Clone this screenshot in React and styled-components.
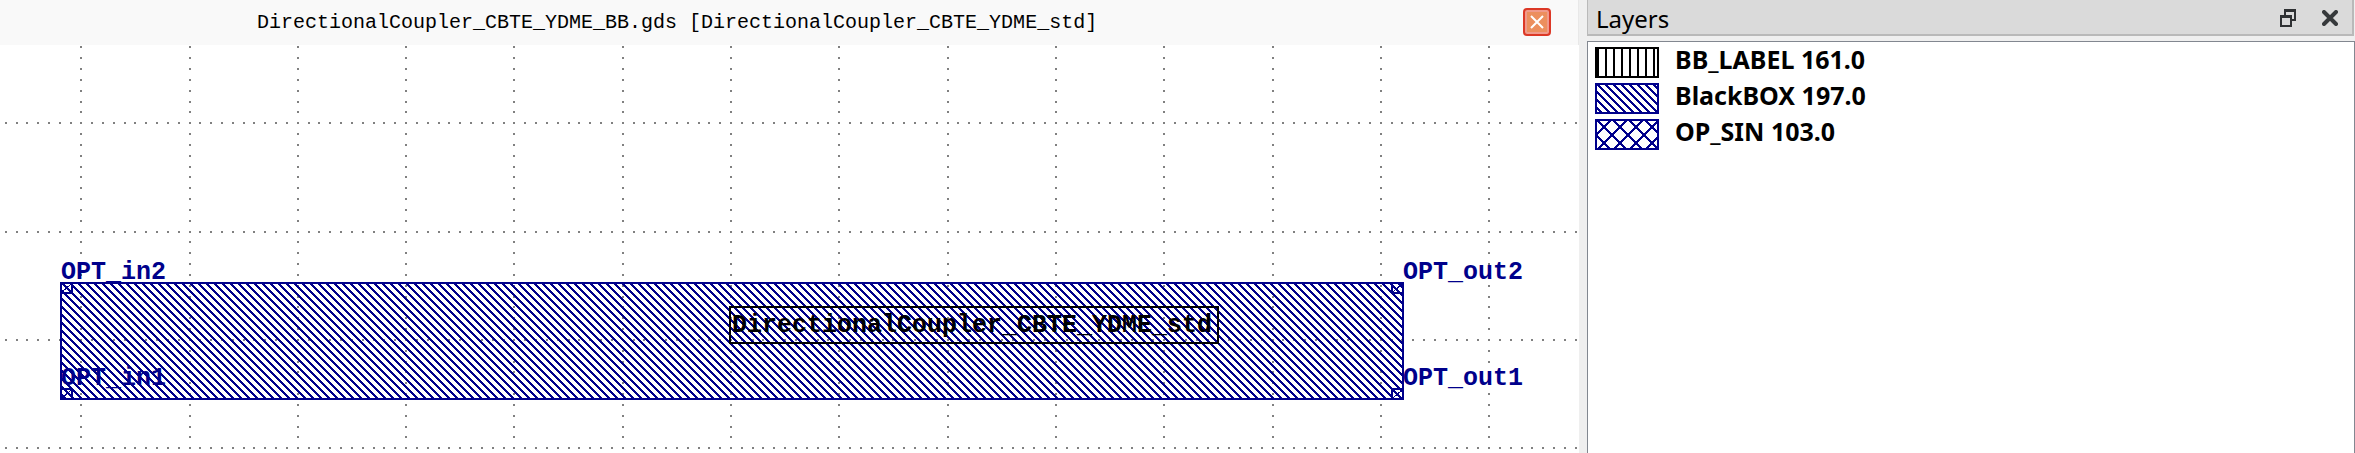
import React from 'react';
import styled, { createGlobalStyle } from 'styled-components';

const NAVY = '#00008b';

const GlobalStyle = createGlobalStyle`
  * { box-sizing: border-box; }
  body { margin: 0; background: #efefef; overflow: hidden; }
`;

const Workspace = styled.div`
  display: grid;
  grid-template-columns: minmax(0, 1579fr) minmax(0, 768fr);
  column-gap: 8px;
  min-height: 100vh;
  background: #efefef;
  color: #000;
`;

const ViewPane = styled.main`
  display: flex;
  flex-direction: column;
  min-width: 0;
  background: #fff;
`;

const ViewHeader = styled.header`
  display: flex;
  align-items: center;
  justify-content: space-between;
  height: 45px;
  padding: 0 27px 2px 257px;
  background: #f9f9f9;
  border-right: 1px solid #e8e8e8;
`;

const ViewTitle = styled.h1`
  margin: 0;
  padding-top: 2px;
  font: 400 20px/28px 'Liberation Mono', monospace;
  white-space: nowrap;
  overflow: hidden;
`;

const CloseView = styled.button`
  display: flex;
  flex: none;
  align-items: center;
  justify-content: center;
  width: 28px;
  height: 28px;
  padding: 0;
  border: 2px solid #dc3826;
  border-radius: 4px;
  background: #ec8f5e;
  box-shadow: inset 0 0 0 2px #f09a8b;
`;

const Canvas = styled.svg`
  display: block;
  flex: 1 1 0;
  width: 100%;
  min-height: 0;
`;

const CanvasText = styled.text`
  font: 700 25px 'Liberation Mono', monospace;
  fill: ${(p) => p.$color};
  white-space: pre;
`;

const LayersPane = styled.aside`
  display: flex;
  flex-direction: column;
  gap: 5px;
  min-width: 0;
  font-family: 'Noto Sans', sans-serif;
`;

const LayersHeader = styled.header`
  display: flex;
  align-items: center;
  height: 36px;
  margin-right: 1px;
  padding: 2px 12px 0 8px;
  background: #dadada;
  border: 1px solid #b9b9b9;
  border-width: 0 2px 2px 1px;
`;

const LayersTitle = styled.h2`
  flex: 1;
  margin: 0;
  padding-top: 2px;
  font-size: 24px;
  line-height: 32px;
  font-weight: 400;
`;

const DockButton = styled.button`
  display: flex;
  align-items: center;
  justify-content: center;
  width: 20px;
  height: 32px;
  margin-left: 22px;
  padding: 0;
  border: 0;
  background: transparent;
`;

const LayerList = styled.ul`
  flex: 1;
  margin: 0;
  padding: 2px 7px;
  list-style: none;
  background: #fff;
  border: 1px solid #828790;
  border-bottom: 0;
`;

const LayerRow = styled.li`
  display: flex;
  align-items: center;
  gap: 16px;
  height: 36px;
`;

const LayerName = styled.span`
  height: 36px;
  font-size: 25px;
  line-height: 30px;
  font-weight: 700;
  white-space: nowrap;
`;

/* Background grid: one line per cell, ten dots between lines. */
const CELL = 108.3;
const ORIGIN_X = 80.2;
const ORIGIN_Y = 77.3;
const dot = (x, y) => `M${Math.round(x)} ${Math.round(y)}h2v2h-2z`;

function buildGrid(columns, rows) {
  const parts = [];
  for (let r = 0; r < rows; r += 1) {
    for (let i = -7; i < columns * 10; i += 1) {
      const nudge = i < 0 ? 0.4 : 0;
      parts.push(dot(ORIGIN_X + (i * CELL) / 10 + nudge, ORIGIN_Y + r * CELL));
    }
  }
  for (let c = 0; c < columns; c += 1) {
    for (let i = -7; i < rows * 10; i += 1) {
      if (i % 10 !== 0) {
        parts.push(dot(ORIGIN_X + c * CELL, ORIGIN_Y + (i * CELL) / 10));
      }
    }
  }
  return parts.join('');
}

const GRID = buildGrid(28, 12);

const PORTS = [
  { x: 60, y: 237, label: 'OPT_in2', tx: 61, ty: 234 },
  { x: 60, y: 343, label: 'OPT_in1', tx: 61, ty: 340 },
  { x: 1391, y: 237, label: 'OPT_out2', tx: 1403, ty: 234 },
  { x: 1391, y: 343, label: 'OPT_out1', tx: 1403, ty: 340 },
];

const DIAGONAL = 'M0 0h3v1h-3z M1 1h3v1h-3z M2 2h3v1h-3z M3 3h3v1h-3z M4 4h3v1h-3z M5 5h3v1h-3z M6 6h2v1h-2z M0 6h1v1h-1z M7 7h1v1h-1z M0 7h2v1h-2z';

function DiagonalPattern({ id, x = 0, y = 0 }) {
  return (
    <pattern id={id} x={x} y={y} width="8" height="8" patternUnits="userSpaceOnUse">
      <path d={DIAGONAL} fill={NAVY} shapeRendering="crispEdges" />
    </pattern>
  );
}

function Layout() {
  return (
    <Canvas role="img" aria-label="Directional coupler layout">
      <defs>
        <DiagonalPattern id="body-hatch" x={4} y={5} />
      </defs>
      <path d={GRID} fill="#808080" shapeRendering="crispEdges" />
      <rect x="61" y="238" width="1342" height="116" fill="url(#body-hatch)" stroke={NAVY} strokeWidth="2" />
      {PORTS.map((p) => (
        <g key={p.label} fill="none" stroke={NAVY} shapeRendering="crispEdges">
          <path d={`M${p.x + 1} ${p.y + 1}h11v10h-11z`} strokeWidth="2" />
          <path d={`M${p.x + 2} ${p.y + 10}l9 -8`} strokeWidth="1" />
          <CanvasText x={p.tx} y={p.ty} $color={NAVY} stroke="none">{p.label}</CanvasText>
        </g>
      ))}
      <rect x="730" y="262" width="488" height="36" fill="none" stroke="#000" strokeWidth="2" />
      <CanvasText x="732" y="287" $color="#000">DirectionalCoupler_CBTE_YDME_std</CanvasText>
    </Canvas>
  );
}

function Swatch({ kind }) {
  const color = kind === 'vertical' ? '#000' : NAVY;
  return (
    <svg width="64" height="31" aria-hidden="true">
      <defs>
        <DiagonalPattern id="swatch-diagonal" x={1} y={1} />
        <pattern id="swatch-vertical" x="2" y="0" width="8" height="8" patternUnits="userSpaceOnUse">
          <path d="M0 0h2v8h-2z" fill="#000" />
        </pattern>
        <pattern id="swatch-cross" x="9" y="8" width="16" height="16" patternUnits="userSpaceOnUse">
          <path d="M-1-1L17 17M17-1L-1 17" stroke={NAVY} strokeWidth="2" shapeRendering="crispEdges" />
        </pattern>
      </defs>
      <rect x="1" y="1" width="62" height="29" fill={`url(#swatch-${kind})`} stroke={color} strokeWidth="2" />
    </svg>
  );
}

const LAYERS = [
  { name: 'BB_LABEL 161.0', kind: 'vertical' },
  { name: 'BlackBOX 197.0', kind: 'diagonal' },
  { name: 'OP_SIN 103.0', kind: 'cross' },
];

export default function App() {
  return (
    <Workspace>
      <GlobalStyle />
      <ViewPane>
        <ViewHeader>
          <ViewTitle>DirectionalCoupler_CBTE_YDME_BB.gds [DirectionalCoupler_CBTE_YDME_std]</ViewTitle>
          <CloseView aria-label="Close view">
            <svg width="14" height="14" viewBox="0 0 14 14">
              <path d="M1 1L13 13M13 1L1 13" stroke="#fff" strokeWidth="2" />
            </svg>
          </CloseView>
        </ViewHeader>
        <Layout />
      </ViewPane>
      <LayersPane>
        <LayersHeader>
          <LayersTitle>Layers</LayersTitle>
          <DockButton aria-label="Float panel">
            <svg width="16" height="18" viewBox="0 0 16 18" fill="none" stroke="#2f3133" strokeWidth="2">
              <path d="M5 6V1H15V11H12M4 2H16" />
              <path d="M1 7H11V17H1ZM0 8H12" />
            </svg>
          </DockButton>
          <DockButton aria-label="Close panel">
            <svg width="16" height="16" viewBox="0 0 16 16">
              <path d="M2 2L14 14M14 2L2 14" stroke="#36393b" strokeWidth="4" strokeLinecap="round" />
            </svg>
          </DockButton>
        </LayersHeader>
        <LayerList>
          {LAYERS.map((layer) => (
            <LayerRow key={layer.name}>
              <Swatch kind={layer.kind} />
              <LayerName>{layer.name}</LayerName>
            </LayerRow>
          ))}
        </LayerList>
      </LayersPane>
    </Workspace>
  );
}
